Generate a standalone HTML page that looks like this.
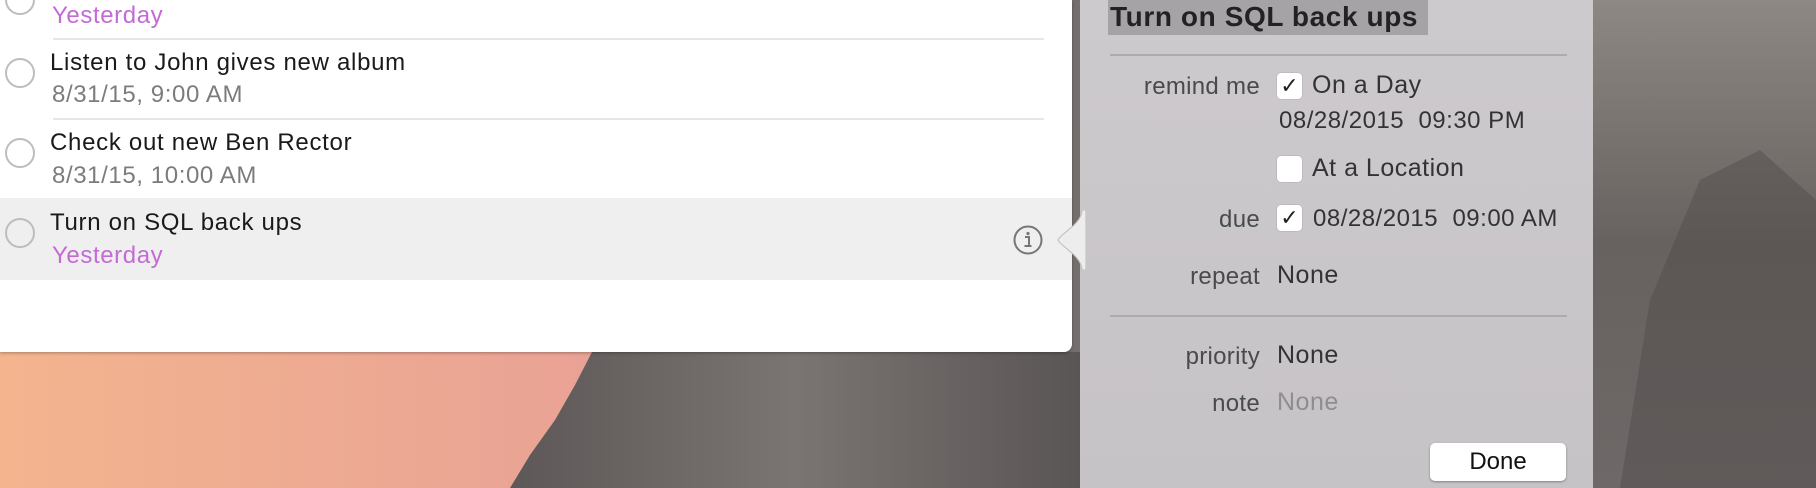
<!DOCTYPE html>
<html><head><meta charset="utf-8"><style>
*{margin:0;padding:0;box-sizing:border-box}
body{width:1816px;height:488px;overflow:hidden;position:relative;font-family:"Liberation Sans",sans-serif;background:#6e6a6a}
.bg{position:absolute;left:0;top:0;width:1816px;height:488px}
.panel{position:absolute;left:0;top:0;width:1072px;height:352px;background:#fff;border-radius:0 0 8px 0;box-shadow:0 1px 3px rgba(0,0,0,.3)}
.t{position:absolute;left:50px;font-size:24px;letter-spacing:.7px;color:#1a1a1a;white-space:nowrap}
.d{position:absolute;left:52px;font-size:24px;letter-spacing:.6px;color:#7c7c7c;white-space:nowrap}
.y{color:#c46ad6}
.c{position:absolute;left:5px;width:30px;height:30px;border:2px solid #bdbdbd;border-radius:50%}
.sep{position:absolute;left:53px;width:991px;height:2px;background:#e6e6e6}
.hl{position:absolute;left:0;top:198px;width:1072px;height:82px;background:#efefef}
.pop{position:absolute;left:1080px;top:0;width:513px;height:488px;background:linear-gradient(180deg,#cdcacd,#c6c3c6)}
.lab{position:absolute;font-size:24px;letter-spacing:.3px;color:#4a4a4a;text-align:right;width:300px;left:960px;white-space:nowrap}
.v{position:absolute;font-size:25px;letter-spacing:.5px;color:#333;white-space:nowrap}
.cb{position:absolute;left:1277px;width:25px;height:26px;background:#fff;border-radius:4px;box-shadow:0 0 1px rgba(0,0,0,.4);font-size:22px;line-height:26px;text-align:center;color:#222}
.hr{position:absolute;left:1110px;width:457px;height:2px;background:#aeabae}
</style></head><body>
<svg class="bg" width="1816" height="488">
<defs><linearGradient id="pk" x1="0" y1="0" x2="1" y2="0"><stop offset="0" stop-color="#f3b48e"/><stop offset="1" stop-color="#e8a096"/></linearGradient>
<linearGradient id="rk" x1="0" y1="0" x2="1" y2="0"><stop offset="0" stop-color="#5d5857"/><stop offset=".5" stop-color="#7a7472"/><stop offset="1" stop-color="#5a5555"/></linearGradient>
<linearGradient id="rr" x1="0" y1="0" x2="0" y2="1"><stop offset="0" stop-color="#8e8884"/><stop offset=".5" stop-color="#67625f"/><stop offset="1" stop-color="#6e6868"/></linearGradient></defs>
<rect width="1816" height="488" fill="url(#rk)"/>
<rect x="0" y="340" width="660" height="148" fill="url(#pk)"/>
<polygon points="592,352 1080,352 1080,488 510,488 530,455 555,420 575,385" fill="url(#rk)"/>
<rect x="1593" y="0" width="223" height="488" fill="url(#rr)"/>
<path d="M1650 300 L1700 180 L1760 150 L1816 200 L1816 488 L1620 488Z" fill="#4f4a4a" opacity=".45"/>
</svg>
<div class="panel"></div>
<div class="hl"></div>
<div class="c" style="top:-15px"></div>
<div class="d y" style="top:2px">Yesterday</div>
<div class="sep" style="top:38px"></div>
<div class="c" style="top:58px"></div>
<div class="t" style="top:49px">Listen to John gives new album</div>
<div class="d" style="top:81px">8/31/15, 9:00 AM</div>
<div class="sep" style="top:118px"></div>
<div class="c" style="top:138px"></div>
<div class="t" style="top:129px">Check out new Ben Rector</div>
<div class="d" style="top:162px">8/31/15, 10:00 AM</div>
<div class="c" style="top:218px"></div>
<div class="t" style="top:209px">Turn on SQL back ups</div>
<div class="d y" style="top:242px">Yesterday</div>
<svg style="position:absolute;left:1012px;top:224px" width="32" height="32"><circle cx="16" cy="16" r="13.5" fill="none" stroke="#777" stroke-width="2"/><circle cx="16" cy="9.5" r="1.6" fill="#777"/><path d="M13 13h4v9M12.5 22h7" stroke="#777" stroke-width="2" fill="none"/></svg>
<div class="pop"></div>
<svg style="position:absolute;left:1056px;top:210px" width="30" height="60"><path d="M26 0 C26 14 4 24 2 30 C4 36 26 46 26 60 L30 60 L30 0Z" fill="#eeedee" stroke="#bbb" stroke-width="1"/></svg>
<div style="position:absolute;left:1108px;top:0;width:320px;height:35px;background:#a6a3a6"></div>
<div style="position:absolute;left:1110px;top:1px;font-size:28px;letter-spacing:.6px;font-weight:bold;color:#222;white-space:nowrap">Turn on SQL back ups</div>
<div class="hr" style="top:54px"></div>
<div class="lab" style="top:73px">remind me</div>
<div class="cb" style="top:73px">✓</div>
<div class="v" style="left:1312px;top:71px">On a Day</div>
<div class="v" style="left:1279px;top:107px;font-size:24px">08/28/2015&nbsp; 09:30 PM</div>
<div class="cb" style="top:156px"></div>
<div class="v" style="left:1312px;top:154px">At a Location</div>
<div class="lab" style="top:206px">due</div>
<div class="cb" style="top:205px">✓</div>
<div class="v" style="left:1313px;top:205px;font-size:24px">08/28/2015&nbsp; 09:00 AM</div>
<div class="lab" style="top:263px">repeat</div>
<div class="v" style="left:1277px;top:261px">None</div>
<div class="hr" style="top:315px"></div>
<div class="lab" style="top:343px">priority</div>
<div class="v" style="left:1277px;top:341px">None</div>
<div class="lab" style="top:390px">note</div>
<div class="v" style="left:1277px;top:388px;color:#8f8d90">None</div>
<div style="position:absolute;left:1430px;top:443px;width:136px;height:38px;background:#fff;border-radius:5px;box-shadow:0 1px 2px rgba(0,0,0,.35);font-size:24px;line-height:38px;text-align:center;color:#111">Done</div>
</body></html>
